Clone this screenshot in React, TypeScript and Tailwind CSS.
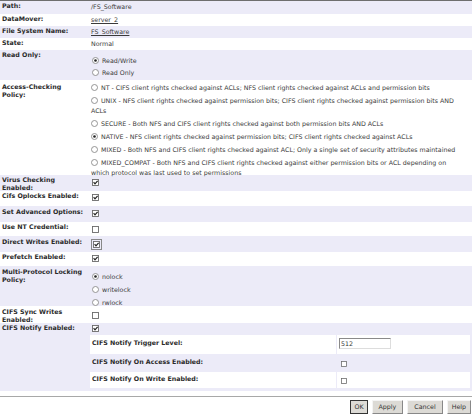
import React from "react";

function Radio({ checked = false }: { checked?: boolean }) {
  return (
    <svg width="7" height="7" viewBox="0 0 7 7" className="inline-block align-[-1px] mr-[3px]">
      <circle cx="3.5" cy="3.5" r="3" fill="#fff" stroke="#8a8a8a" strokeWidth="0.9" />
      {checked && <circle cx="3.5" cy="3.5" r="1.3" fill="#222" />}
    </svg>
  );
}

function Check({ checked = false, focus = false, small = false }: { checked?: boolean; focus?: boolean; small?: boolean }) {
  const s = small ? 6 : 7;
  const box = (
    <svg width={s} height={s} viewBox="0 0 7 7" className="block">
      <rect x="0.5" y="0.5" width="6" height="6" fill="#fff" stroke="#6a6a6a" strokeWidth="0.9" />
      {checked && <path d="M1.6 3.2 L3 4.8 L5.6 1.8" fill="none" stroke="#222" strokeWidth="1.2" />}
    </svg>
  );
  if (focus) {
    return <span className="inline-block border border-[#888] p-px">{box}</span>;
  }
  return <span className="inline-block">{box}</span>;
}

function Row({
  label,
  h,
  lavender,
  children,
}: {
  label: React.ReactNode;
  h: string;
  lavender?: boolean;
  children?: React.ReactNode;
}) {
  return (
    <div className={`flex ${h} ${lavender ? "bg-[#ecebf8]" : "bg-white"}`}>
      <div className="w-[90px] shrink-0 pl-[2px] pt-px font-bold leading-[8px] text-[#2a2a2a]">{label}</div>
      <div className="flex-1 pr-[6px]">{children}</div>
    </div>
  );
}

export default function App() {
  return (
    <div className="w-[472px] h-[416px] bg-white font-['DejaVu_Sans',sans-serif] text-[6.3px] text-[#3a3a3a] overflow-hidden">
      <div className="h-px bg-[#6e6e6e]" />

      <Row label="Path:" h="h-[13px]" lavender>
        <div className="pt-[2px] pl-px leading-[8px]">/FS_Software</div>
      </Row>
      <Row label="DataMover:" h="h-[12px]">
        <div className="pt-[2px] pl-px leading-[8px] underline">server_2</div>
      </Row>
      <Row label="File System Name:" h="h-[12px]" lavender>
        <div className="pt-[2px] pl-px leading-[8px] underline">FS_Software</div>
      </Row>
      <Row label="State:" h="h-[12px]">
        <div className="pt-[2px] pl-px leading-[8px]">Normal</div>
      </Row>
      <Row label="Read Only:" h="h-[30px]" lavender>
        <div className="pt-[5px] pl-[2px] leading-[12px]">
          <div>
            <Radio checked />
            Read/Write
          </div>
          <div>
            <Radio />
            Read Only
          </div>
        </div>
      </Row>
      <Row label={<div className="pt-[2px]">Access-Checking<br />Policy:</div>} h="h-[95px]">
        <div className="pt-[3px] pl-px leading-[10px]">
          <div className="mb-[3px]">
            <Radio />
            NT - CIFS client rights checked against ACLs; NFS client rights checked against ACLs and permission bits
          </div>
          <div className="mb-[3px]">
            <Radio />
            UNIX - NFS client rights checked against permission bits; CIFS client rights checked against permission bits AND ACLs
          </div>
          <div className="mb-[3px]">
            <Radio />
            SECURE - Both NFS and CIFS client rights checked against both permission bits AND ACLs
          </div>
          <div className="mb-[3px]">
            <Radio checked />
            NATIVE - NFS client rights checked against permission bits; CIFS client rights checked against ACLs
          </div>
          <div className="mb-[3px]">
            <Radio />
            MIXED - Both NFS and CIFS client rights checked against ACL; Only a single set of security attributes maintained
          </div>
          <div>
            <Radio />
            MIXED_COMPAT - Both NFS and CIFS client rights checked against either permission bits or ACL depending on which protocol was last used to set permissions
          </div>
        </div>
      </Row>
      <Row label={<>Virus Checking<br />Enabled:</>} h="h-[16px]" lavender>
        <div className="pt-[4px] pl-[2px]"><Check checked /></div>
      </Row>
      <Row label="Cifs Oplocks Enabled:" h="h-[15px]">
        <div className="pt-[3px] pl-[2px]"><Check checked /></div>
      </Row>
      <Row label={<div className="pt-px">Set Advanced Options:</div>} h="h-[16px]" lavender>
        <div className="pt-[4px] pl-[2px]"><Check checked /></div>
      </Row>
      <Row label="Use NT Credential:" h="h-[14px]">
        <div className="pt-[4px] pl-[2px]"><Check /></div>
      </Row>
      <Row label={<div className="pt-px">Direct Writes Enabled:</div>} h="h-[16px]" lavender>
        <div className="pt-[3px] pl-px"><Check checked focus /></div>
      </Row>
      <Row label="Prefetch Enabled:" h="h-[14px]">
        <div className="pt-[3px] pl-[2px]"><Check checked /></div>
      </Row>
      <Row label={<div className="pt-px">Multi-Protocol Locking<br />Policy:</div>} h="h-[40px]" lavender>
        <div className="pt-[4px] pl-[2px] leading-[13px]">
          <div>
            <Radio checked />
            nolock
          </div>
          <div>
            <Radio />
            writelock
          </div>
          <div>
            <Radio />
            rwlock
          </div>
        </div>
      </Row>
      <Row label={<div className="pt-px">CIFS Sync Writes<br />Enabled:</div>} h="h-[17px]">
        <div className="pt-[6px] pl-[2px]"><Check /></div>
      </Row>
      <div className="flex h-[68px] bg-[#ecebf8]">
        <div className="w-[90px] shrink-0 pl-[2px] pt-px font-bold leading-[8px] text-[#2a2a2a]">CIFS Notify Enabled:</div>
        <div className="flex-1 pr-[2px]">
          <div className="pt-[2px] pl-[2px] h-[12px]"><Check checked /></div>
          <div className="flex flex-col gap-px font-bold text-[#2a2a2a]">
            <div className="flex h-[19px] gap-px">
              <div className="w-[246px] bg-white pl-[2px] pt-[4px] leading-[8px]">CIFS Notify Trigger Level:</div>
              <div className="flex-1 bg-white pl-[2px] pt-[3px]">
                <div className="w-[52px] h-[11px] border border-[#8a8a8a] border-r-[#ddd] border-b-[#ddd] bg-white pl-px font-normal text-[#333] leading-[9px]">512</div>
              </div>
            </div>
            <div className="flex h-[16px] gap-px">
              <div className="w-[246px] bg-[#ecebf8] pl-[2px] pt-[3px] leading-[8px]">CIFS Notify On Access Enabled:</div>
              <div className="flex-1 bg-[#ecebf8] pl-[4px] pt-[5px]"><Check small /></div>
            </div>
            <div className="flex h-[16px] gap-px">
              <div className="w-[246px] bg-white pl-[2px] pt-[3px] leading-[8px]">CIFS Notify On Write Enabled:</div>
              <div className="flex-1 bg-white pl-[4px] pt-[5px]"><Check small /></div>
            </div>
          </div>
        </div>
      </div>

      <div className="h-[5px]" />
      <div className="h-px bg-[#a8a8a8]" />
      <div className="flex justify-end gap-[4px] pt-[3px] pr-[1px]">
        <button className="h-[14px] px-[3px] bg-[#dcdad5] border border-[#333] text-[6.3px] leading-[12px] text-[#333]">OK</button>
        <button className="h-[14px] px-[6px] bg-[#dcdad5] border border-[#f4f4f4] border-r-[#888] border-b-[#888] text-[6.3px] leading-[12px] text-[#333]">Apply</button>
        <button className="h-[14px] px-[6px] bg-[#dcdad5] border border-[#f4f4f4] border-r-[#888] border-b-[#888] text-[6.3px] leading-[12px] text-[#333]">Cancel</button>
        <button className="h-[14px] px-[4px] bg-[#dcdad5] border border-[#f4f4f4] border-r-[#888] border-b-[#888] text-[6.3px] leading-[12px] text-[#333]">Help</button>
      </div>
    </div>
  );
}
